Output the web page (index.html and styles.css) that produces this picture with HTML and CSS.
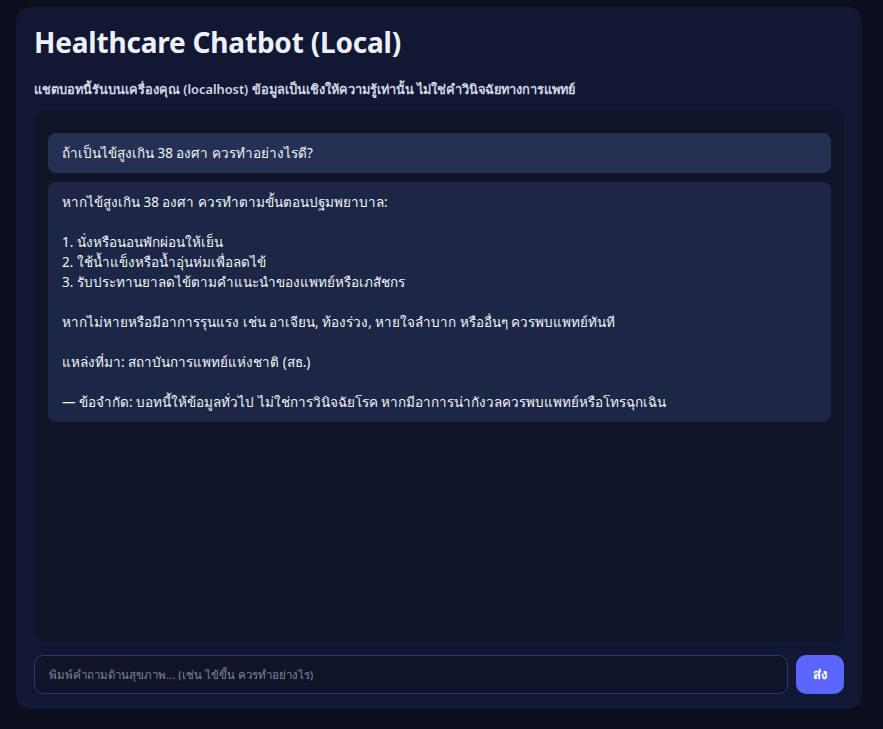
FILE: index.html
```html
<!DOCTYPE html>
<html lang="th">
<head>
<meta charset="utf-8">
<title>Healthcare Chatbot (Local)</title>
<link rel="stylesheet" href="styles.css">
</head>
<body>
<main class="app">
  <h1 class="title">Healthcare Chatbot (Local)</h1>
  <p class="subtitle">แชตบอทนี้รันบนเครื่องคุณ (localhost) ข้อมูลเป็นเชิงให้ความรู้เท่านั้น ไม่ใช่คำวินิจฉัยทางการแพทย์</p>
  <section class="chat">
    <div class="msg msg-user">ถ้าเป็นไข้สูงเกิน 38 องศา ควรทำอย่างไรดี?</div>
    <div class="msg msg-bot">หากไข้สูงเกิน 38 องศา ควรทำตามขั้นตอนปฐมพยาบาล:

1. นั่งหรือนอนพักผ่อนให้เย็น
2. ใช้น้ำแข็งหรือน้ำอุ่นห่มเพื่อลดไข้
3. รับประทานยาลดไข้ตามคำแนะนำของแพทย์หรือเภสัชกร

หากไม่หายหรือมีอาการรุนแรง เช่น อาเจียน, ท้องร่วง, หายใจลำบาก หรืออื่นๆ ควรพบแพทย์ทันที

แหล่งที่มา: สถาบันการแพทย์แห่งชาติ (สธ.)

— ข้อจำกัด: บอทนี้ให้ข้อมูลทั่วไป ไม่ใช่การวินิจฉัยโรค หากมีอาการน่ากังวลควรพบแพทย์หรือโทรฉุกเฉิน</div>
  </section>
  <form class="composer">
    <input class="input" type="text" placeholder="พิมพ์คำถามด้านสุขภาพ... (เช่น ไข้ขึ้น ควรทำอย่างไร)">
    <button class="send" type="button">ส่ง</button>
  </form>
</main>
</body>
</html>
```
FILE: styles.css
```css
* { box-sizing: border-box; }
html, body { height: 100%; }
body {
  margin: 0;
  background: #0b0f1b;
  font-family: "Noto Sans", "Open Sans", sans-serif;
  color: #e5e9f5;
  padding: 7px 21px 20px 16px;
}
.app {
  background: #121833;
  border-radius: 14px;
  height: 702px;
  padding: 19px 18px 15px 18px;
  display: flex;
  flex-direction: column;
}
.title {
  margin: 0;
  font-size: 28px;
  line-height: 32px;
  font-weight: 700;
  color: #eef1fb;
  letter-spacing: -0.2px;
}
.subtitle {
  margin: 21px 0 0 0;
  font-size: 12.8px;
  line-height: 20px;
  font-weight: 600;
  color: #cfd6e6;
}
.chat {
  margin-top: 12px;
  flex: 1;
  background: #0f1429;
  border-radius: 10px;
  padding: 22px 13px 14px 14px;
  display: flex;
  flex-direction: column;
  gap: 9px;
}
.msg {
  border-radius: 8px;
  padding: 10px 14px;
  font-size: 13.5px;
  line-height: 20px;
  color: #f1f4fb;
  white-space: pre-line;
}
.msg-user { background: #243152; }
.msg-bot { background: #1c2645; }
.composer {
  margin: 14px 0 0 0;
  display: flex;
  gap: 8px;
}
.input {
  flex: 1;
  height: 39px;
  background: #0f1429;
  border: 1px solid #2e3a66;
  border-radius: 9px;
  padding: 0 14px;
  font-family: inherit;
  font-size: 11.5px;
  color: #e5e9f5;
  outline: none;
}
.input::placeholder { color: #7d849c; }
.send {
  width: 48px;
  height: 39px;
  border: none;
  border-radius: 10px;
  background: #5b66fc;
  color: #ffffff;
  font-family: inherit;
  font-weight: 700;
  font-size: 13px;
}
```
